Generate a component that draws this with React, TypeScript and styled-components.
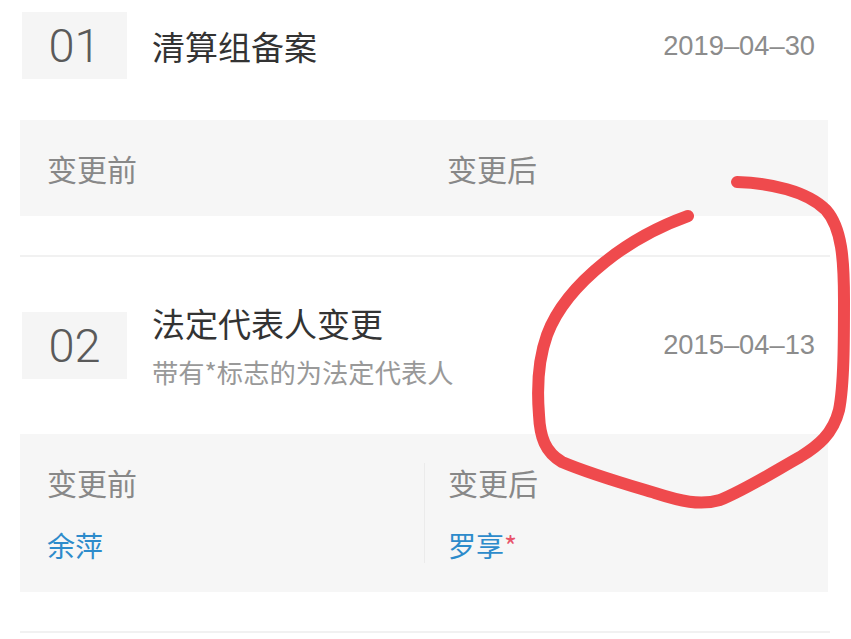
import React from "react";
import styled, { createGlobalStyle } from "styled-components";

const Global = createGlobalStyle`
  html, body { margin: 0; padding: 0; background: #ffffff; }
  body { font-family: "Noto Sans CJK SC", "Noto Sans", sans-serif; }
  * { box-sizing: border-box; }
`;

const Page = styled.div`
  position: relative;
  width: 851px;
  height: 639px;
  overflow: hidden;
  background: #ffffff;
`;

const Section = styled.section<{ $top: number }>`
  padding: ${(p) => p.$top}px 23px 39px 20px;
`;

const Divider = styled.div`
  height: 2px;
  margin: 0 21px 0 20px;
  background: #f1f1f1;
`;

const Header = styled.div<{ $h: number }>`
  display: flex;
  align-items: center;
  height: ${(p) => p.$h}px;
`;

const NumBox = styled.div`
  width: 105px;
  height: 67px;
  margin-left: 2px;
  background: #f5f5f5;
  display: flex;
  align-items: center;
  justify-content: center;
  font-family: Roboto, "Liberation Sans", sans-serif;
  font-weight: 300;
  font-size: 47px;
  color: #5a5a5a;
  flex-shrink: 0;
`;

const TitleBlock = styled.div`
  flex: 1;
  display: flex;
  flex-direction: column;
  gap: 12px;
  margin-left: 25px;
`;

const Title = styled.div`
  font-size: 33px;
  line-height: 42px;
  color: #333333;
`;

const Sub = styled.div`
  font-size: 26.3px;
  line-height: 32px;
  color: #999999;
`;

const DateText = styled.div`
  font-family: "Liberation Sans", Arial, sans-serif;
  font-size: 27.3px;
  color: #8c8c8c;
  margin-right: 13px;
`;

const ChangeBox = styled.div<{ $gap: number }>`
  margin-top: ${(p) => p.$gap}px;
  background: #f6f6f6;
  display: grid;
  grid-template-columns: 1fr 1fr;
  padding: 29px 0 29px 0;
`;

const Col = styled.div<{ $first?: boolean; $divided?: boolean }>`
  display: flex;
  flex-direction: column;
  padding-left: ${(p) => (p.$first ? 27 : 23)}px;
  border-left: ${(p) => (p.$divided ? "1px solid #ebebeb" : "none")};
`;

const Label = styled.div`
  font-size: 30px;
  line-height: 38px;
  color: #888888;
`;

const Value = styled.div`
  margin-top: 26px;
  font-size: 28px;
  line-height: 36px;
  color: #2d8bcb;
`;

const Star = styled.span`
  color: #e8546a;
`;

const Scribble = styled.svg`
  position: absolute;
  left: 0;
  top: 0;
  pointer-events: none;
`;

export default function App() {
  return (
    <Page>
      <Global />
      <Section $top={12}>
        <Header $h={67}>
          <NumBox>01</NumBox>
          <TitleBlock>
            <Title>清算组备案</Title>
          </TitleBlock>
          <DateText>2019–04–30</DateText>
        </Header>
        <ChangeBox $gap={41}>
          <Col $first>
            <Label>变更前</Label>
          </Col>
          <Col>
            <Label>变更后</Label>
          </Col>
        </ChangeBox>
      </Section>
      <Divider />
      <Section $top={44}>
        <Header $h={88}>
          <NumBox>02</NumBox>
          <TitleBlock>
            <Title>法定代表人变更</Title>
            <Sub>带有*标志的为法定代表人</Sub>
          </TitleBlock>
          <DateText>2015–04–13</DateText>
        </Header>
        <ChangeBox $gap={45}>
          <Col $first>
            <Label>变更前</Label>
            <Value>余萍</Value>
          </Col>
          <Col $divided>
            <Label>变更后</Label>
            <Value>
              罗享<Star>*</Star>
            </Value>
          </Col>
        </ChangeBox>
      </Section>
      <Divider />
      <Scribble width="851" height="639" viewBox="0 0 851 639">
        <path
          d="M737 182 C770 183 807 191 826 210 C842 228 844 260 844 300 C844 340 844 385 839 410 C833 434 818 446 800 457 C775 471 745 490 720 500 C700 506 680 501 655 493 C625 484 590 474 562 462 C545 452 540 437 539 415 C537 390 538 360 547 335 C558 305 580 282 605 262 C630 242 660 226 688 216"
          fill="none"
          stroke="#ef4a4d"
          strokeWidth="12"
          strokeLinecap="round"
          strokeLinejoin="round"
        />
      </Scribble>
    </Page>
  );
}
